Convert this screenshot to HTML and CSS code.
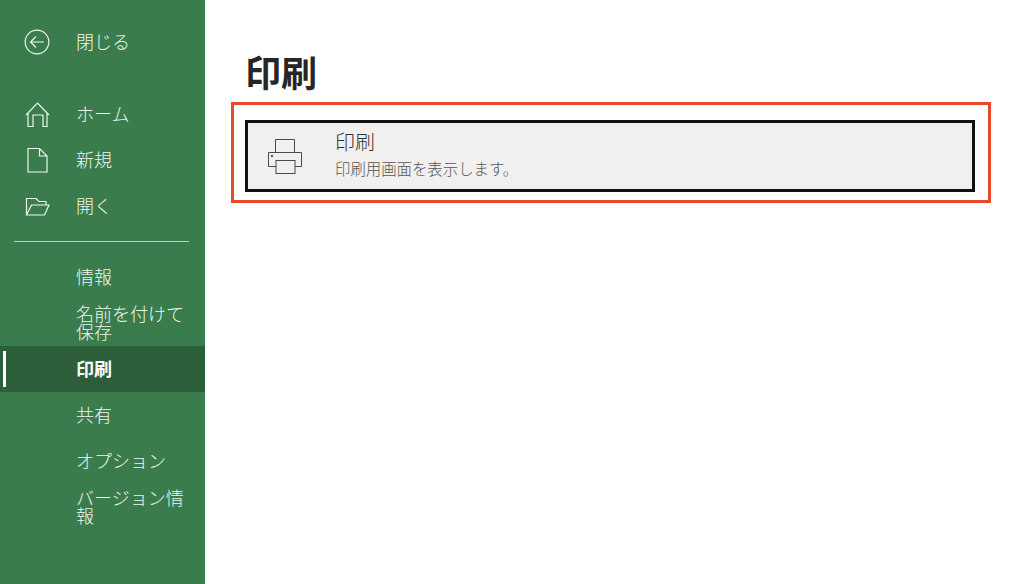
FILE: index.html
```html
<!DOCTYPE html>
<html lang="ja">
<head>
    <meta charset="UTF-8">
    <title>印刷</title>
    <link rel="stylesheet" href="styles.css">
</head>
<body>
    <nav class="sidebar">
        <div class="nav-item nav-close">
            <svg class="nav-icon" width="26" height="26" viewBox="0 0 26 26" fill="none" stroke="currentColor" stroke-width="1.2">
                <circle cx="13" cy="13" r="11.8"/>
                <path d="M20 13H6.500M12 7.500L6.500 13l5.500 5.500"/>
            </svg>
            <span>閉じる</span>
        </div>
        <div class="nav-item">
            <svg class="nav-icon" width="26" height="26" viewBox="0 0 26 26" fill="none" stroke="currentColor" stroke-width="1.2">
                <path d="M2 14L13.500 2 25 14M4 11.500V25.500h5V14h10v11.500h4V11.500"/>
            </svg>
            <span>ホーム</span>
        </div>
        <div class="nav-item">
            <svg class="nav-icon" width="26" height="26" viewBox="0 0 26 26" fill="none" stroke="currentColor" stroke-width="1.2">
                <path d="M4 1.500H15.500L23 9V25H4zM15.500 1.500V9H23"/>
            </svg>
            <span>新規</span>
        </div>
        <div class="nav-item">
            <svg class="nav-icon" width="26" height="26" viewBox="0 0 26 26" fill="none" stroke="currentColor" stroke-width="1.2">
                <path d="M2.500 22V5.500H12l3 3h7v3.500M2.500 22l5-10H25l-4.500 10z"/>
            </svg>
            <span>開く</span>
        </div>
        <hr class="nav-divider">
        <div class="nav-item">
            <span>情報</span>
        </div>
        <div class="nav-item">
            <span>名前を付けて保存</span>
        </div>
        <div class="nav-item active">
            <span>印刷</span>
        </div>
        <div class="nav-item">
            <span>共有</span>
        </div>
        <div class="nav-item">
            <span>オプション</span>
        </div>
        <div class="nav-item">
            <span>バージョン情報</span>
        </div>
    </nav>

    <main class="content">
        <h1 class="page-title">印刷</h1>
        <div class="highlight-box">
            <div class="print-button">
                <svg class="print-icon" width="36" height="36" viewBox="0 0 36 36" fill="none" stroke="#4a4a4a" stroke-width="1">
                    <path d="M8.500 14V1.500h19V14"/>
                    <path d="M9 28.500H1.500V14.500h33v14H28"/>
                    <rect x="9" y="22.500" width="19" height="13"/>
                    <circle cx="5" cy="18" r="0.8" fill="#4a4a4a"/>
                </svg>
                <div class="print-text">
                    <div class="print-title">印刷</div>
                    <div class="print-desc">印刷用画面を表示します。</div>
                </div>
            </div>
        </div>
    </main>
</body>
</html>
```

FILE: styles.css
```css
* {
    box-sizing: border-box;
}

html, body {
    height: 100%;
}

body {
    margin: 0;
    display: flex;
    overflow: hidden;
    background: #fff;
    font-family: "Noto Sans CJK JP", "Noto Sans", sans-serif;
}

.sidebar {
    width: 205px;
    flex-shrink: 0;
    padding-top: 19px;
    background: #3a7c4c;
    color: #eef5ef;
}

.nav-item {
    position: relative;
    display: flex;
    align-items: center;
    height: 46px;
    padding: 0 15px 2px 76px;
    font-size: 18px;
    line-height: 18px;
    font-weight: 300;
}

.nav-close {
    margin-bottom: 26px;
}

.nav-icon {
    position: absolute;
    left: 24px;
    top: 10px;
}

.nav-divider {
    height: 1px;
    margin: 12px 16px 12px 14px;
    border: 0;
    background: #b5d3bd;
}

.nav-item.active {
    background: #2d5e3a;
    color: #fff;
    font-weight: 700;
}

.nav-item.active::before {
    content: "";
    position: absolute;
    left: 3px;
    top: 5px;
    bottom: 5px;
    width: 2.500px;
    background: #fff;
}

.content {
    flex: 1;
    padding: 48px 33px 0 26px;
}

.page-title {
    margin: 0 0 6px;
    height: 48px;
    padding-left: 14px;
    font-size: 36px;
    line-height: 47px;
    font-weight: 700;
    color: #262626;
}

.highlight-box {
    height: 101px;
    padding: 15px 13px 8px 11px;
    border: 3px solid #e8492c;
}

.print-button {
    display: flex;
    align-items: center;
    height: 72px;
    padding-left: 19px;
    background: #f1f0ee;
    border: 3px solid #111;
}

.print-icon {
    flex-shrink: 0;
}

.print-text {
    margin-left: 32px;
    padding-bottom: 4px;
}

.print-title {
    font-size: 20px;
    line-height: 24px;
    font-weight: 300;
    color: #333;
}

.print-desc {
    margin-top: 4px;
    font-size: 15.400px;
    line-height: 20px;
    font-weight: 300;
    color: #555;
}
```
